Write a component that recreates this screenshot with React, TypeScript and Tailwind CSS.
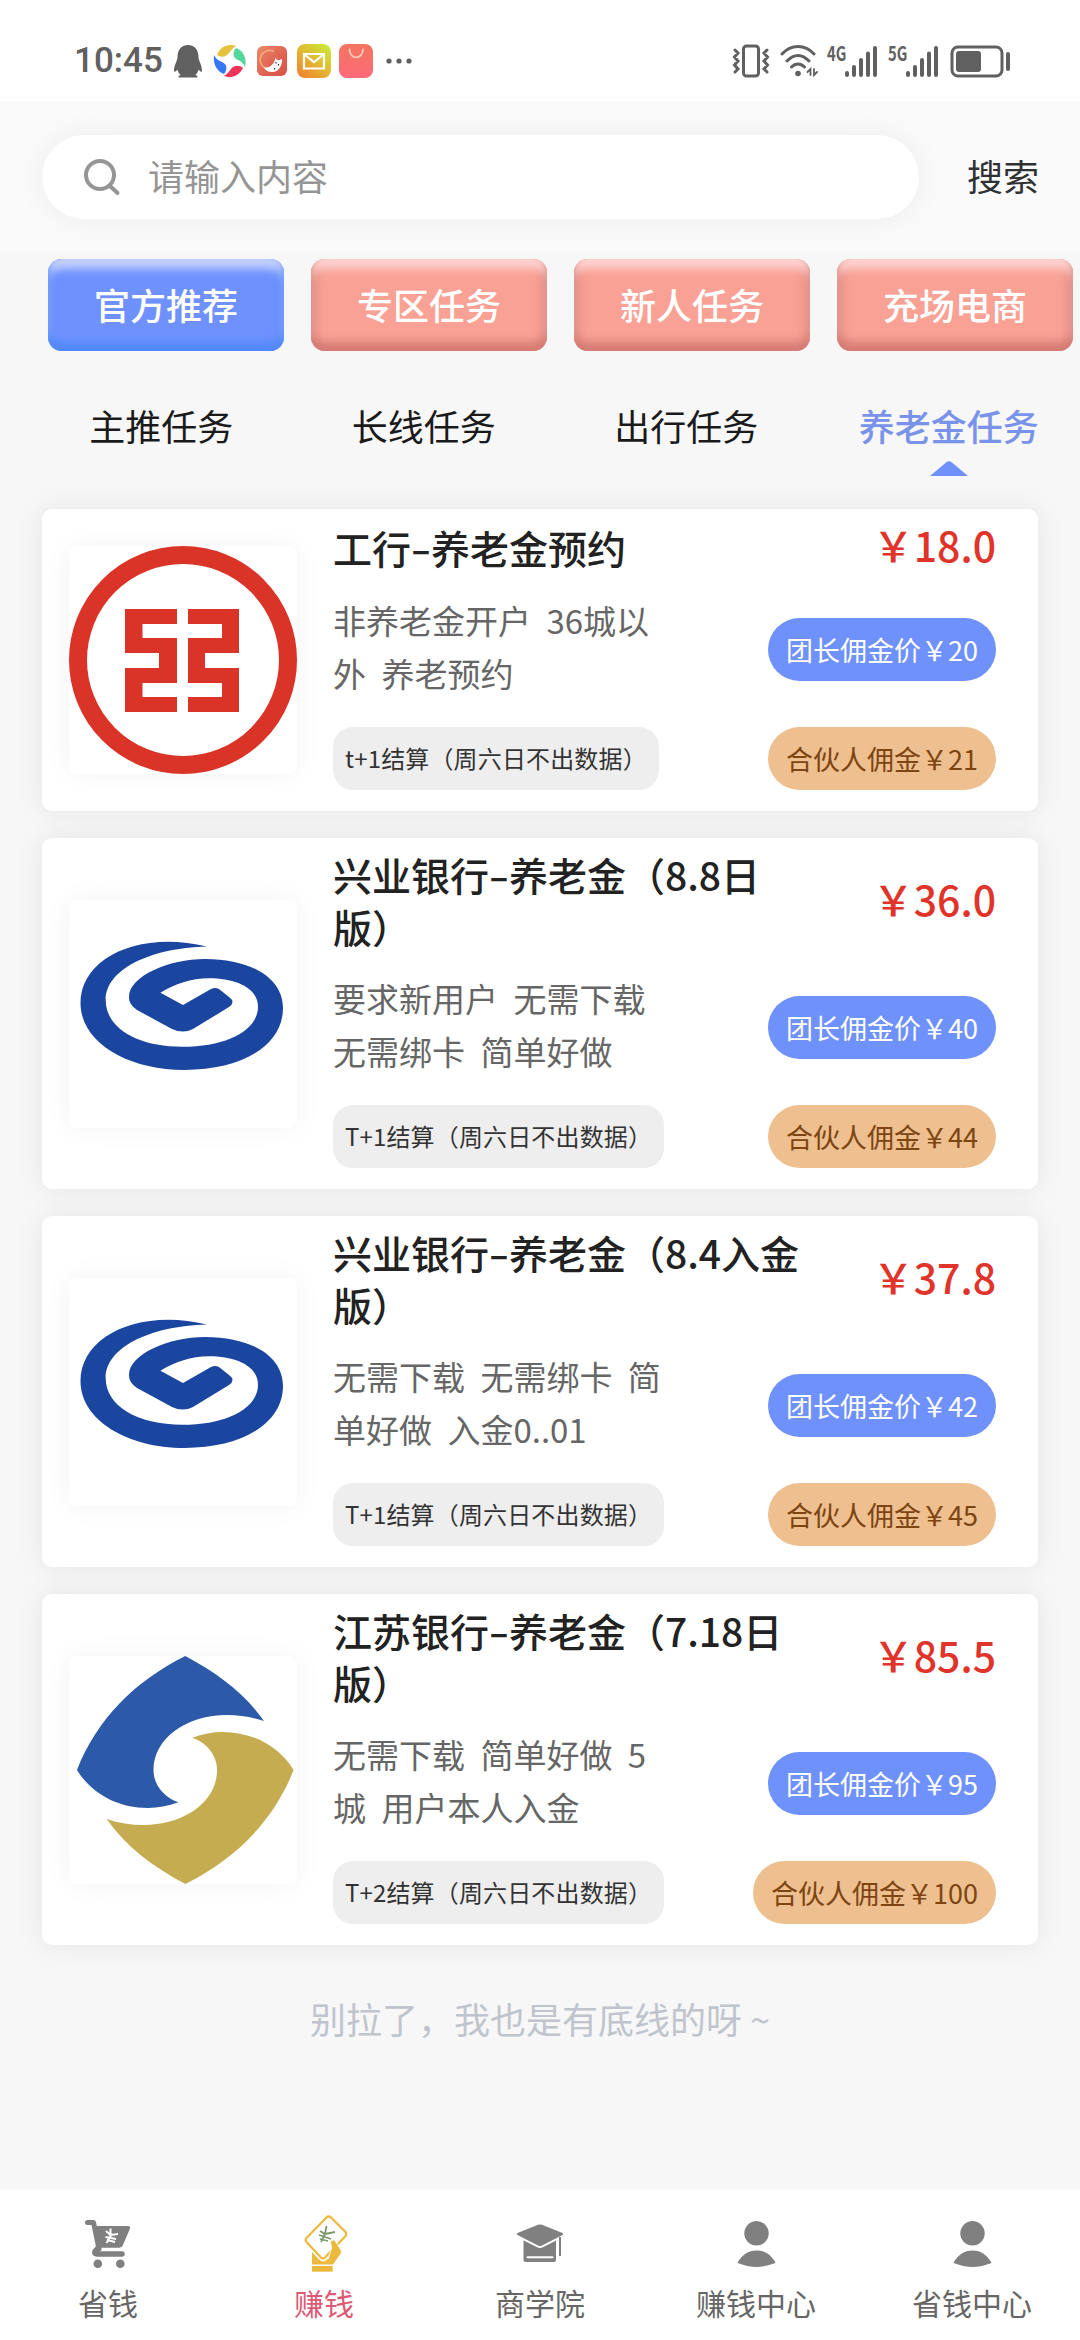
import React from 'react';
import clsx from 'clsx';

interface Task {
  logo: 'icbc' | 'cib' | 'jsb';
  title: string[];
  desc: string[];
  tag: string;
  price: string;
  leader: string;
  partner: string;
}

const categories = ['官方推荐', '专区任务', '新人任务', '充场电商'];
const tabs = ['主推任务', '长线任务', '出行任务', '养老金任务'];

const tasks: Task[] = [
  {
    logo: 'icbc',
    title: ['工行-养老金预约'],
    desc: ['非养老金开户 36城以', '外 养老预约'],
    tag: 't+1结算（周六日不出数据）',
    price: '18.0',
    leader: '20',
    partner: '21',
  },
  {
    logo: 'cib',
    title: ['兴业银行-养老金（8.8日', '版）'],
    desc: ['要求新用户 无需下载', '无需绑卡 简单好做'],
    tag: 'T+1结算（周六日不出数据）',
    price: '36.0',
    leader: '40',
    partner: '44',
  },
  {
    logo: 'cib',
    title: ['兴业银行-养老金（8.4入金', '版）'],
    desc: ['无需下载 无需绑卡 简', '单好做 入金0..01'],
    tag: 'T+1结算（周六日不出数据）',
    price: '37.8',
    leader: '42',
    partner: '45',
  },
  {
    logo: 'jsb',
    title: ['江苏银行-养老金（7.18日', '版）'],
    desc: ['无需下载 简单好做 5', '城 用户本人入金'],
    tag: 'T+2结算（周六日不出数据）',
    price: '85.5',
    leader: '95',
    partner: '100',
  },
];

const jsbHalf =
  'M116.3 0C150 18 176 38 195 65C183 61 171 59 158 59C118 59 84.5 82 84.5 114C84.5 128 94 141 109.4 146.3C99 150 89 152 79 152C48 152 22 137 8 114C28 63 66 25 116.3 0Z';

function BankLogo({ name }: { name: Task['logo'] }) {
  return (
    <svg viewBox="0 0 228 228" className="block h-[228px] w-[228px]">
      {name === 'icbc' && (
        <>
          <circle cx="114" cy="114" r="105" fill="none" stroke="#da3428" strokeWidth="18" />
          <path
            fill="#da3428"
            d="M56 63H108V78H73.500V92H108V137H73.500V151H108V166H56V122H90V107H56ZM119 63H170V107H136V122H170V166H119V151H153V137H119V92H153V78H119Z"
          />
        </>
      )}
      {name === 'cib' && (
        <path
          fill="#1a46a0"
          d="M138 46.500C70 30 11.500 58 11.500 103C11.500 142 58 170 115.500 170C172 170 214 146 214 108C214 78 182 59 136 59C100 59 60 76 60 97C60 103 63 106 68 110L103 129Q114 134 124 129L160 107Q167 102 160 97L150 89Q146 87 142 89L114 105L91.400 92.700C106 84 122 78.300 140 78.300C167 78.300 189 88 189 106.700C189 130 158 146.700 113.500 146.700C68 146.700 36.700 128 36.700 100C36.700 70 80 48 138 46.500Z"
        />
      )}
      {name === 'jsb' && (
        <>
          <path fill="#2c5aa8" d={jsbHalf} />
          <path fill="#c6ac50" transform="rotate(180 116.3 114)" d={jsbHalf} />
        </>
      )}
    </svg>
  );
}

function Signal({ label }: { label: string }) {
  return (
    <div className="flex items-start">
      <span className="w-[17px] origin-left scale-x-[0.74] text-[20px] leading-[17px] font-bold whitespace-nowrap">
        {label}
      </span>
      <svg viewBox="0 0 34 34" className="h-[34px] w-[34px]" stroke="currentColor" strokeWidth="4" strokeLinecap="round">
        <path d="M3 29V31M10 23V31M17 16V31M24 9.500V31M31 4V31" />
      </svg>
    </div>
  );
}

function StatusBar() {
  return (
    <div className="flex h-[101px] items-center justify-between bg-white pt-[21px] pr-[68px] pl-[74px] text-[#606060]">
      <div className="flex items-center">
        <span className="w-[100px] font-[Roboto,sans-serif] text-[35px] leading-[36px] font-medium">10:45</span>
        <svg viewBox="0 0 28 34" className="h-[34px] w-[28px]" fill="currentColor">
          <path d="M14 1C7 1 3.500 6 3.500 13C3.500 17 0 21 0 26.500C0 28.500 1.500 28 3.500 25.500C4 28 5 29.500 6.500 31C4 32 4 33.500 5 33.500H23C24 33.500 24 32 21.500 31C23 29.500 24 28 24.500 25.500C26.500 28 28 28.500 28 26.500C28 21 24.500 17 24.500 13C24.500 6 21 1 14 1Z" />
        </svg>
        <svg viewBox="0 0 34 34" className="ml-[11px] h-[34px] w-[34px]">
          <path d="M4 11C7 2 16-1 23 2C20 4 18 6 16 9C13 13 9 14 4 11Z" fill="#e6c13c" />
          <path d="M23 4C31 7 34 15 32 23C30 19 28 17 25 16C20 14 19 9 23 4Z" fill="#55d69a" />
          <path d="M30 24C26 32 18 35 11 32C14 30 16 28 18 25C21 21 26 21 30 24Z" fill="#ee3558" />
          <path d="M11 30C3 27 0 19 1 11C3 15 6 17 9 18C14 20 15 25 11 30Z" fill="#3478f6" />
        </svg>
        <svg viewBox="0 0 30 30" className="ml-[10px] h-[30px] w-[30px]">
          <defs>
            <linearGradient id="game" x1="0" y1="0" x2="1" y2="1">
              <stop offset="0" stopColor="#ea8a68" />
              <stop offset="0.6" stopColor="#e0604f" />
              <stop offset="1" stopColor="#d9534c" />
            </linearGradient>
          </defs>
          <rect width="30" height="30" rx="6" fill="url(#game)" />
          <path d="M17 5.500A9 9 0 1 0 8 22" fill="none" stroke="#f6a97c" strokeWidth="1.600" />
          <path d="M6.500 21C12 23 17 19 18.500 11.500C20 15 22 14.500 25 13C25.500 20 21 26.500 15 26C11 26 8 24 6.500 21Z" fill="#fff" />
          <path d="M19 16V17.500M21.500 18V19.500M17.500 22V23.500" stroke="#333" strokeWidth="1.200" />
        </svg>
        <svg viewBox="0 0 34 34" className="ml-[10px] h-[34px] w-[34px]">
          <defs>
            <linearGradient id="mail" x1="0.9" y1="0" x2="0.1" y2="1">
              <stop offset="0" stopColor="#c8ec3c" />
              <stop offset="0.5" stopColor="#e3b830" />
              <stop offset="1" stopColor="#f08030" />
            </linearGradient>
          </defs>
          <rect width="34" height="34" rx="8" fill="url(#mail)" />
          <path d="M7 10H27V24.500H7ZM8 11L17 18L26 11" fill="none" stroke="#fff" strokeWidth="2.200" />
        </svg>
        <svg viewBox="0 0 34 34" className="ml-[8px] h-[34px] w-[34px]">
          <defs>
            <linearGradient id="bag" x1="0" y1="0" x2="0" y2="1">
              <stop offset="0" stopColor="#f4755f" />
              <stop offset="1" stopColor="#fb6a78" />
            </linearGradient>
          </defs>
          <rect width="34" height="34" rx="8" fill="url(#bag)" />
          <path d="M10.500 5.500C11 16 23.500 16 24 5.500" fill="none" stroke="#ffc9b8" strokeWidth="1.800" strokeLinecap="round" />
        </svg>
        <svg viewBox="0 0 28 6" className="ml-[13px] h-[6px] w-[28px]" fill="currentColor">
          <circle cx="3" cy="3" r="2.600" />
          <circle cx="13" cy="3" r="2.600" />
          <circle cx="23" cy="3" r="2.600" />
        </svg>
      </div>

      <div className="flex items-center">
        <svg viewBox="0 0 38 34" className="h-[34px] w-[38px]" fill="none" stroke="currentColor" strokeWidth="3">
          <rect x="11.500" y="2" width="15" height="30" rx="3" />
          <path
            d="M3 6L6 9L2.500 13L6 17L2.500 21L6 25L3 28M35 6L32 9L35.500 13L32 17L35.500 21L32 25L35 28"
            strokeWidth="3"
            strokeLinecap="round"
          />
        </svg>
        <svg viewBox="0 0 38 34" className="ml-[10px] h-[34px] w-[38px]" fill="none" stroke="currentColor" strokeWidth="3" strokeLinecap="round">
          <path d="M2 10C11 0 25 0 34 10M7 17C14 9.500 22 9.500 29 17M11.500 23C15.500 19 20.500 19 24.500 23" />
          <circle cx="18" cy="29.500" r="2.800" fill="currentColor" stroke="none" />
          <path d="M30.500 31V25L27.500 28M34 25V31L37 28" strokeWidth="1.800" />
        </svg>
        <div className="ml-[9px]">
          <Signal label="4G" />
        </div>
        <div className="ml-[10px]">
          <Signal label="5G" />
        </div>
        <svg viewBox="0 0 62 34" className="ml-[11px] h-[34px] w-[62px]" fill="none" stroke="currentColor">
          <rect x="2" y="3" width="50" height="29" rx="6" strokeWidth="3" />
          <rect x="6" y="7" width="25" height="21" rx="3" fill="currentColor" stroke="none" />
          <path d="M58 10V25" strokeWidth="4" strokeLinecap="round" />
        </svg>
      </div>
    </div>
  );
}

function SearchBar() {
  return (
    <div className="flex h-[151px] items-center bg-[#fafafa] pl-[42px]">
      <div className="flex h-[84px] w-[877px] items-center rounded-full bg-white pl-[42px] shadow-[0_0_30px_rgba(0,0,0,0.06)]">
        <svg viewBox="0 0 37 38" className="h-[38px] w-[37px]" fill="none" stroke="#959595" strokeWidth="4" strokeLinecap="round">
          <circle cx="16" cy="17" r="14" />
          <path d="M26 28L33.500 35" />
        </svg>
        <span className="ml-[27px] -translate-y-[2px] text-[36px] text-[#959595]">请输入内容</span>
      </div>
      <span className="ml-[48px] -translate-y-[2px] text-[36px] text-[#303133]">搜索</span>
    </div>
  );
}

function Title({ text }: { text: string }) {
  const [bank, name] = text.split('-');
  if (!name) return <div>{text}</div>;
  return (
    <div>
      {bank}
      <span className="inline-block w-[20px] scale-x-150 text-center">-</span>
      {name}
    </div>
  );
}

function TaskCard({ task }: { task: Task }) {
  return (
    <div className="flex items-center rounded-[10px] bg-white pr-[42px] pl-[27px] shadow-[0_0_28px_rgba(0,0,0,0.08)]">
      <div className="shrink-0 rounded-[8px] bg-white shadow-[0_0_28px_rgba(0,0,0,0.05)]">
        <BankLogo name={task.logo} />
      </div>
      <div className="ml-[36px] flex-1 pt-[12px] pb-[21px] whitespace-nowrap">
        <div className="flex items-center justify-between">
          <div className="-translate-y-[2px] text-[39px] leading-[52px] font-medium text-[#222]">
            {task.title.map((line) => (
              <Title key={line} text={line} />
            ))}
          </div>
          <span className="-translate-y-[4px] text-[41px] leading-[55px] font-medium text-[#e0342b]">￥{task.price}</span>
        </div>
        <div className="mt-[20px] flex items-center justify-between">
          <div className="-translate-y-[2px] text-[33px] leading-[53px] text-[#666] [word-spacing:8px]">
            {task.desc.map((line) => (
              <div key={line}>{line}</div>
            ))}
          </div>
          <span className="rounded-full bg-[#6f91fc] px-[18px] text-[27px] leading-[63px] text-white">
            团长佣金价￥{task.leader}
          </span>
        </div>
        <div className="mt-[25px] flex items-center justify-between">
          <span className="rounded-[20px] bg-[#eee] px-[12px] pb-[2px] text-[24px] leading-[61px] tracking-[0.150px] text-[#333]">
            {task.tag}
          </span>
          <span className="rounded-full bg-[#eebf8f] px-[18px] text-[27px] leading-[63px] text-[#7d4512]">
            合伙人佣金￥{task.partner}
          </span>
        </div>
      </div>
    </div>
  );
}

function CartIcon() {
  return (
    <svg viewBox="0 0 60 60" className="h-[60px] w-[60px]" fill="#808080">
      <path d="M9.500 9.500H15.500L21 36" fill="none" stroke="#808080" strokeWidth="5" strokeLinecap="round" strokeLinejoin="round" />
      <path d="M16 13H50Q52.500 13 52 15.500L45 32Q44 34.700 41 34.700H20Z" />
      <path d="M20 35L17 38.500Q16 41 19 41H44" fill="none" stroke="#808080" strokeWidth="5.500" strokeLinecap="round" strokeLinejoin="round" />
      <circle cx="19.800" cy="50.700" r="4.300" />
      <circle cx="42.300" cy="50.700" r="4.300" />
      <path d="M28 18L32.500 22L32.500 15.500M40 21L32.500 22M27.500 24L38 26M33 22L28.500 30M29 27L37 29" fill="none" stroke="#fff" strokeWidth="2" />
    </svg>
  );
}

function EarnIcon() {
  const card =
    'M32.500 4.500L12.500 25Q11 27 12.500 29L27 44.500Q29 46.500 31 44.500L51.500 23Q53 21 51.500 19L37 4.500Q34.700 2.500 32.500 4.500Z';
  return (
    <svg viewBox="0 0 60 60" className="h-[60px] w-[60px]">
      <path d="M18 37L28 48L42 34L47 37.500Q48 39.500 46.500 41.500L39 51.500H18Z" fill="#ecb93d" />
      <path d={card} fill="#fff" stroke="#fff" strokeWidth="5.500" />
      <path d={card} fill="#fff" stroke="#ecb93d" strokeWidth="2.200" />
      <path
        d="M34 47L36.500 38.500Q38.500 35 36.500 30Q36.500 26.500 39.500 27Q41 27 42 29L47 37Q48 39.500 46.500 41.500L41 49Z"
        fill="#ecb93d"
        stroke="#fff"
        strokeWidth="1"
      />
      <path d="M34 46L41 45L41 49L38 51H33Z" fill="#ecb93d" />
      <path d="M18 53H38.700V58.700H18Z" fill="#ecb93d" />
      <path d="M26 18L31 21L32.500 13M41 19L31 21M25 22L37 26M31 21L27 29M26 26L34 28" fill="none" stroke="#7b9a6c" strokeWidth="1.800" />
    </svg>
  );
}

function CollegeIcon() {
  return (
    <svg viewBox="0 0 60 60" className="h-[60px] w-[60px]" fill="#808080">
      <path d="M13.500 24H46V47Q46 49 44 49H15.500Q13.500 49 13.500 47Z" />
      <path
        d="M7.500 20L28 11.800Q30 11 32 11.800L52.500 20Q54 21 52.500 22L32 32.500Q30 33.500 28 32.500L7.500 22Q6 21 7.500 20Z"
        stroke="#fff"
        strokeWidth="4"
        paintOrder="stroke"
      />
      <path d="M17.500 44.300H42.500" stroke="#fff" strokeWidth="2" strokeLinecap="round" />
      <path d="M50 24V43" stroke="#808080" strokeWidth="2" />
    </svg>
  );
}

function UserIcon() {
  return (
    <svg viewBox="0 0 60 60" className="h-[60px] w-[60px]" fill="#808080">
      <circle cx="30.500" cy="20.300" r="12.200" />
      <path d="M11.500 49.500C16 42 22 37.400 30.500 37.400S45 42 49.500 49.500Q49.500 50.500 47 50.800Q38 54 30.500 54T14 50.800Q11.500 50.500 11.500 49.500Z" />
    </svg>
  );
}

const navItems = [
  { label: '省钱', Icon: CartIcon },
  { label: '赚钱', Icon: EarnIcon, active: true },
  { label: '商学院', Icon: CollegeIcon },
  { label: '赚钱中心', Icon: UserIcon },
  { label: '省钱中心', Icon: UserIcon },
];

export default function App() {
  return (
    <div className="flex h-[2340px] w-[1080px] flex-col overflow-hidden bg-[#f7f7f7] font-['Noto_Sans_CJK_SC',sans-serif]">
      <StatusBar />
      <SearchBar />

      <div className="flex gap-[27px] pt-[7px] pl-[48px]">
        {categories.map((name, i) => (
          <div
            key={name}
            className={clsx(
              'flex h-[92px] w-[236px] shrink-0 items-center justify-center rounded-[14px] pb-[3px] text-[36px] font-medium text-white',
              i === 0
                ? 'bg-[#6f91fe] shadow-[inset_0_-8px_10px_#5189fb,inset_0_10px_8px_#c5d0ff,inset_0_0_12px_#4a80f5]'
                : 'bg-[#f9a195] shadow-[inset_0_-8px_10px_#d47c74,inset_0_10px_8px_#fdd3cf,inset_0_0_14px_#c96b62]'
            )}
          >
            {name}
          </div>
        ))}
      </div>

      <div className="mt-[47px] flex pl-[30px]">
        {tabs.map((name, i) => (
          <div
            key={name}
            className={clsx(
              'flex w-[262.5px] flex-col items-center text-[36px] leading-[54px]',
              i === 3 ? 'font-medium text-[#7a93ea]' : 'text-[#1a1a1a]'
            )}
          >
            {name}
            {i === 3 && (
              <svg viewBox="0 0 38 15" className="mt-[9px] h-[15px] w-[38px]" fill="#6f91fc">
                <path d="M0 15L16 1.500Q19-1 22 1.500L38 15Z" />
              </svg>
            )}
          </div>
        ))}
      </div>

      <div className="mx-[42px] mt-[33px] flex flex-col gap-[27px]">
        {tasks.map((task, i) => (
          <TaskCard key={i} task={task} />
        ))}
      </div>

      <p className="mt-[46px] text-center text-[36px] leading-[54px] text-[#c0c4cc]">别拉了，我也是有底线的呀 ~</p>

      <div className="mt-auto flex h-[150px] bg-white pt-[23px]">
        {navItems.map(({ label, Icon, active }) => (
          <div
            key={label}
            className={clsx('flex flex-1 flex-col items-center text-[30px] leading-[36px]', active ? 'text-[#dd5a74]' : 'text-[#666]')}
          >
            <Icon />
            <span className="mt-[11px]">{label}</span>
          </div>
        ))}
      </div>
    </div>
  );
}
